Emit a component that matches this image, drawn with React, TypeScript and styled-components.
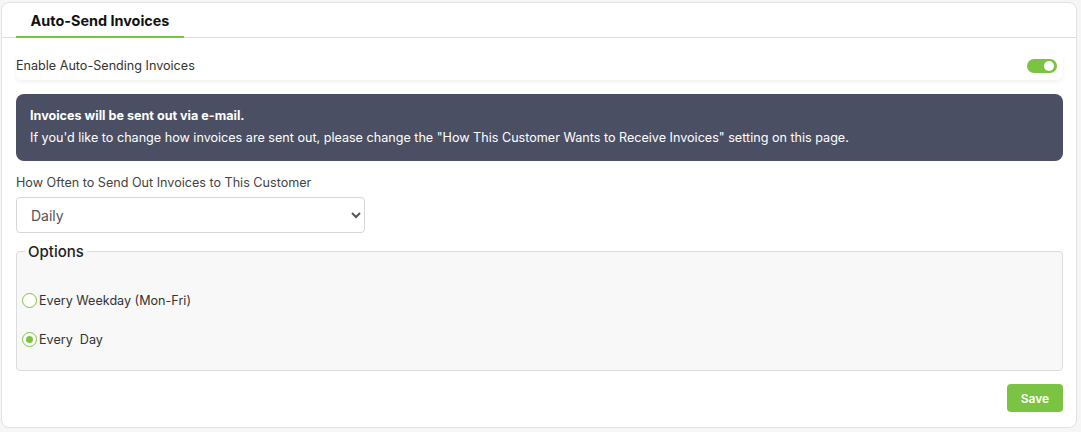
import React, { useState } from "react";
import styled, { createGlobalStyle } from "styled-components";

const Global = createGlobalStyle`
  html, body { margin: 0; padding: 0; background: #f6f6f7; }
  body { font-family: Inter, "Noto Sans", Arial, sans-serif; color: #333; }
  * { box-sizing: border-box; }
`;

const GREEN = "#7bc443";

const Card = styled.div`
  margin: 2px 0 0 1px;
  width: 1076px;
  height: 426px;
  background: #fff;
  border: 1px solid #e2e2e4;
  border-radius: 8px;
  display: flex;
  flex-direction: column;
`;

const TabBar = styled.div`
  height: 35px;
  border-bottom: 1px solid #dcdcde;
  display: flex;
  align-items: flex-end;
  padding-left: 14px;
`;

const Tab = styled.div`
  width: 168px;
  height: 100%;
  display: flex;
  align-items: center;
  justify-content: center;
  font-size: 14.4px;
  font-weight: 700;
  color: #111;
  border-bottom: 2px solid ${GREEN};
  margin-bottom: -1px;
  padding-top: 1px;
`;

const Body = styled.div`
  flex: 1;
  padding: 13px 13px 0 14px;
  display: flex;
  flex-direction: column;
`;

const ToggleRow = styled.div`
  height: 29px;
  display: flex;
  align-items: center;
  justify-content: space-between;
  border-radius: 6px;
  box-shadow: 0 2px 4px rgba(0, 0, 0, 0.06);
  padding-right: 6px;
  font-size: 12.6px;
  color: #333;
`;

const Switch = styled.button<{ $on: boolean }>`
  width: 30px;
  height: 14px;
  border-radius: 7px;
  border: none;
  padding: 0;
  background: ${(p) => (p.$on ? GREEN : "#ccc")};
  position: relative;
  cursor: pointer;
  &::after {
    content: "";
    position: absolute;
    top: 2px;
    left: ${(p) => (p.$on ? "17px" : "2px")};
    width: 10px;
    height: 10px;
    border-radius: 50%;
    background: #fff;
  }
`;

const Alert = styled.div`
  margin-top: 14px;
  height: 67px;
  background: #4a4f63;
  border-radius: 8px;
  color: #fff;
  font-size: 12.6px;
  line-height: 22px;
  padding: 11px 14px;
`;

const Strong = styled.div`
  font-weight: 700;
`;

const FieldLabel = styled.div`
  margin-top: 13px;
  font-size: 12.6px;
  color: #444;
  line-height: 18px;
`;

const Select = styled.select`
  margin-top: 5px;
  width: 349px;
  height: 36px;
  border: 1px solid #d6d6d8;
  border-radius: 4px;
  background: #fff;
  font-family: Inter, Arial, sans-serif;
  font-size: 14px;
  color: #555;
  padding: 0 10px;
  outline: none;
`;

const Fieldset = styled.fieldset`
  margin: 9px 0 0 0;
  height: 129px;
  border: 1px solid #dcdcde;
  border-radius: 4px;
  background: #f8f8f9;
  padding: 0 0 0 5px;
  display: flex;
  flex-direction: column;
`;

const Legend = styled.legend`
  font-size: 15px;
  font-weight: 500;
  color: #222;
  padding: 0 3px;
  margin-left: 3px;
`;

const Options = styled.div`
  display: flex;
  flex-direction: column;
  gap: 15px;
  padding-top: 27px;
`;

const RadioRow = styled.label`
  display: flex;
  align-items: center;
  gap: 2px;
  height: 24px;
  font-size: 12.6px;
  color: #333;
  cursor: pointer;
  white-space: pre;
`;

const RadioDot = styled.span<{ $checked: boolean }>`
  width: 15px;
  height: 15px;
  border-radius: 50%;
  border: 1.5px solid ${GREEN};
  background: #fff;
  display: flex;
  align-items: center;
  justify-content: center;
  &::after {
    content: "";
    width: 7px;
    height: 7px;
    border-radius: 50%;
    background: ${(p) => (p.$checked ? GREEN : "transparent")};
  }
`;

const Footer = styled.div`
  display: flex;
  justify-content: flex-end;
  margin-top: 13px;
`;

const SaveButton = styled.button`
  width: 56px;
  height: 28px;
  border: none;
  border-radius: 4px;
  background: ${GREEN};
  color: #fff;
  font-family: Inter, Arial, sans-serif;
  font-size: 12px;
  font-weight: 600;
  cursor: pointer;
`;

export default function App() {
  const [on, setOn] = useState(true);
  const [choice, setChoice] = useState("every");
  return (
    <>
      <Global />
      <Card>
        <TabBar>
          <Tab>Auto-Send Invoices</Tab>
        </TabBar>
        <Body>
          <ToggleRow>
            <span>Enable Auto-Sending Invoices</span>
            <Switch $on={on} onClick={() => setOn(!on)} aria-label="toggle" />
          </ToggleRow>
          <Alert>
            <Strong>Invoices will be sent out via e-mail.</Strong>
            <div>
              If you'd like to change how invoices are sent out, please change the "How This
              Customer Wants to Receive Invoices" setting on this page.
            </div>
          </Alert>
          <FieldLabel>How Often to Send Out Invoices to This Customer</FieldLabel>
          <Select defaultValue="daily">
            <option value="daily">Daily</option>
            <option value="weekly">Weekly</option>
            <option value="monthly">Monthly</option>
          </Select>
          <Fieldset>
            <Legend>Options</Legend>
            <Options>
              <RadioRow onClick={() => setChoice("weekday")}>
                <RadioDot $checked={choice === "weekday"} />
                Every Weekday (Mon-Fri)
              </RadioRow>
              <RadioRow onClick={() => setChoice("every")}>
                <RadioDot $checked={choice === "every"} />
                {"Every  Day"}
              </RadioRow>
            </Options>
          </Fieldset>
          <Footer>
            <SaveButton>Save</SaveButton>
          </Footer>
        </Body>
      </Card>
    </>
  );
}
